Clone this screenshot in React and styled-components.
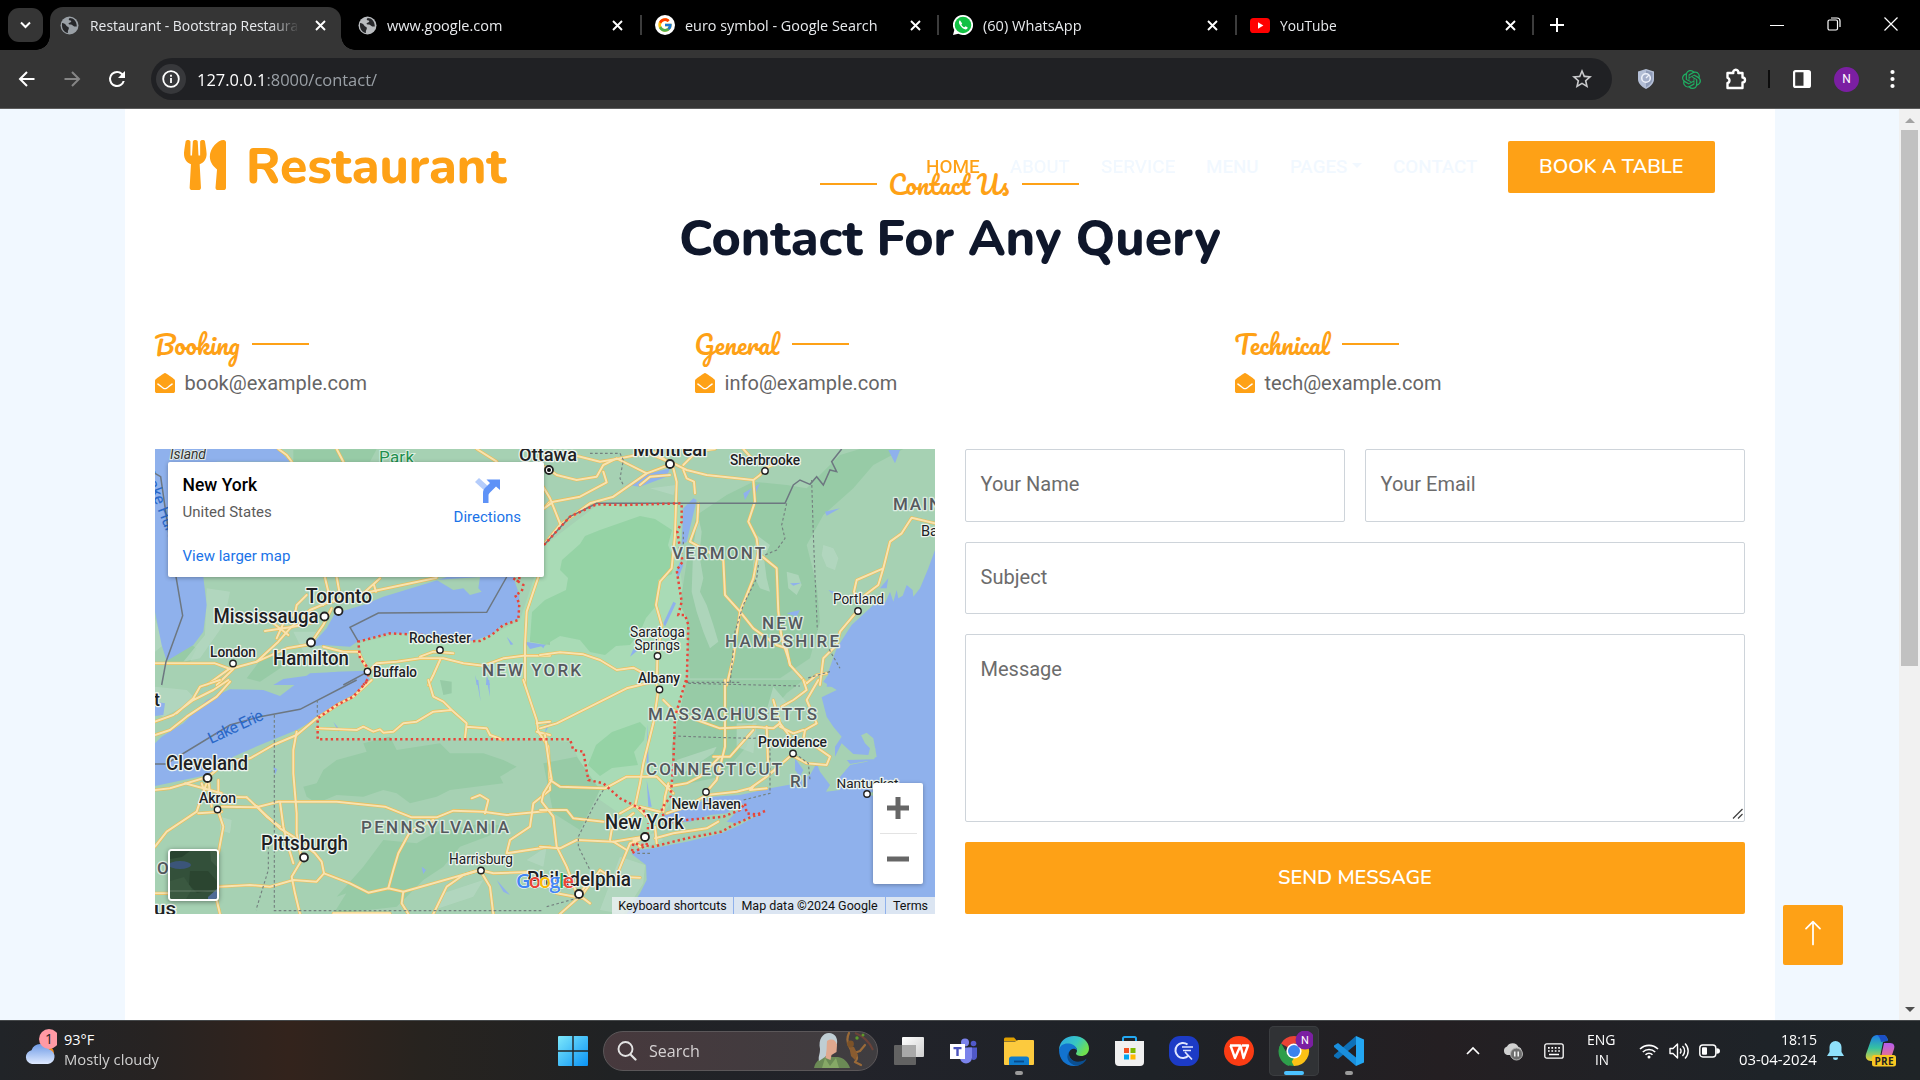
import React, { useLayoutEffect, useRef, useState } from "react";
import styled, { createGlobalStyle, css } from "styled-components";
import { FaUtensils, FaEnvelopeOpen } from "react-icons/fa";
import { BsArrowUp } from "react-icons/bs";
import { FcGoogle } from "react-icons/fc";
import { SiOpenai } from "react-icons/si";

const orange = "#FEA116";
const navy = "#0F172B";
const uiFont = '"Open Sans", "Noto Sans", sans-serif';
const roboto = 'Roboto, "Liberation Sans", sans-serif';
const bodyFont = 'Heebo, Roboto, "Liberation Sans", sans-serif';
const rounded = 'Nunito, "Open Sans", "Noto Sans", sans-serif';

const GlobalStyle = createGlobalStyle`
  * { box-sizing: border-box; }
  html, body { margin: 0; padding: 0; overflow: hidden; }
  body { font-family: ${roboto}; background: #000; }
  svg { display: block; flex: none; }
  h1, h5, p { margin: 0; }
`;

/* Text condensed or stretched to a given advance width */
const FitBox = styled.span`
  display: inline-block;
  flex: none;
  white-space: nowrap;
  text-align: left;
`;
const FitInner = styled.span`
  display: inline-block;
  transform-origin: 0 50%;
`;
function Fit({ w, children }) {
  const ref = useRef(null);
  const [k, setK] = useState(1);
  useLayoutEffect(() => {
    setK(w / ref.current.offsetWidth);
  }, [w]);
  return (
    <FitBox style={{ width: w }}>
      <FitInner ref={ref} style={{ transform: `scaleX(${k})` }}>{children}</FitInner>
    </FitBox>
  );
}

const Screen = styled.div`
  width: 1920px;
  height: 1080px;
  display: flex;
  flex-direction: column;
  overflow: hidden;
`;

/* ---------- Browser chrome ---------- */
const TabStrip = styled.div`
  height: 50px;
  background: #000;
  display: flex;
  align-items: flex-start;
  padding-left: 8px;
  color: #e8eaed;
  font: 15px/20px ${uiFont};
`;
const TabSearch = styled.div`
  width: 35px;
  height: 34px;
  margin-top: 8px;
  border-radius: 11px;
  background: #353535;
  display: grid;
  place-items: center;
`;
const Tab = styled.div`
  position: relative;
  height: 43px;
  margin-top: 7px;
  flex: none;
  width: ${(p) => (p.$active ? 291 : 297.5)}px;
  margin-left: ${(p) => (p.$active ? 7 : 0)}px;
  padding: 0 15.5px 7px ${(p) => (p.$active ? 10 : 16.5)}px;
  display: flex;
  align-items: center;
  gap: ${(p) => (p.$active ? 11 : 10)}px;
  border-radius: 13px 13px 0 0;
  background: ${(p) => (p.$active ? "#353535" : "transparent")};
  ${(p) =>
    p.$active &&
    css`
      &::before, &::after {
        content: "";
        position: absolute;
        bottom: 0;
        width: 14px;
        height: 14px;
      }
      &::before { left: -14px; background: radial-gradient(circle at 0 0, transparent 13.5px, #353535 14px); }
      &::after { right: -14px; background: radial-gradient(circle at 100% 0, transparent 13.5px, #353535 14px); }
    `}
`;
const TabTitle = styled.span`
  flex: 1;
  overflow: hidden;
  white-space: nowrap;
  height: 20px;
  ${(p) => p.$fade && "-webkit-mask-image: linear-gradient(90deg, #000 84%, transparent 98%);"}
`;
const TabRule = styled.div`
  width: 2px;
  flex: none;
  height: 20px;
  margin: 15px -3px 0 1px;
  background: #3c3c3c;
`;
const NewTab = styled.div`
  margin: 18px 0 0 18.5px;
`;
const WindowButtons = styled.div`
  margin: 16px 22px 0 auto;
  display: flex;
  gap: 42px;
  align-items: center;
`;
const Toolbar = styled.div`
  height: 59px;
  background: #353535;
  border-bottom: 1px solid #5c5c5c;
  display: flex;
  align-items: center;
  padding: 0 5px 0 17px;
`;
const NavButtons = styled.div`
  display: flex;
  align-items: center;
  gap: 25px;
  width: 134px;
  flex: none;
  svg:last-child { margin-left: -2px; }
`;
const AddressBar = styled.div`
  width: 1461px;
  flex: none;
  height: 42px;
  border-radius: 21px;
  background: #202124;
  display: flex;
  align-items: center;
  padding: 0 18px 0 5px;
  color: #fff;
  font: 17px/24px ${uiFont};
`;
const InfoDot = styled.div`
  width: 30px;
  height: 30px;
  border-radius: 50%;
  background: #37383b;
  display: grid;
  place-items: center;
  margin-right: 11px;
`;
const Host = styled.span`
  color: #fff;
  padding-top: 1px;
  i { font-style: normal; color: #9aa0a6; }
`;
const StarSlot = styled.div`margin-left: auto;`;
const Extensions = styled.div`
  margin-left: auto;
  display: flex;
  align-items: center;
`;
const ExtSlot = styled.div`
  width: ${(p) => p.$w || 45}px;
  display: grid;
  place-items: center;
`;
const Rule = styled.div`
  width: 2px;
  height: 18px;
  background: #0c0c0c;
`;
const Avatar = styled.div`
  width: 25px;
  height: 25px;
  border-radius: 50%;
  background: #7b1fa2;
  color: #fff;
  font: 12px/25px ${roboto};
  text-align: center;
`;

/* ---------- Page ---------- */
const Viewport = styled.div`
  height: 911px;
  display: flex;
  background: #f1f8ff;
  position: relative;
`;
const Container = styled.main`
  width: 1650px;
  margin-left: 125px;
  background: #fff;
  position: relative;
  padding: 60px 30px 0;
`;
const Header = styled.header`
  position: absolute;
  top: 0;
  left: 0;
  width: 100%;
  height: 116px;
  padding: 0 60px 0 59px;
  display: flex;
  align-items: center;
`;
const Brand = styled.div`
  display: flex;
  align-items: center;
  gap: 20px;
  color: ${orange};
  font: 800 50px/60px ${rounded};
  svg { width: 42px; height: 50px; margin-top: -5px; }
`;
const Nav = styled.nav`
  margin-left: auto;
  display: flex;
  gap: 31px;
  margin-right: 31px;
`;
const NavItem = styled.a`
  font: 500 18.75px/30px ${bodyFont};
  color: ${(p) => (p.$on ? orange : "#F1F8FF")};
  display: flex;
  align-items: center;
  gap: 5px;
`;
const Caret = styled.i`
  border: 5px solid transparent;
  border-top-color: #f1f8ff;
  border-bottom: 0;
  margin-top: -3px;
`;
const Solid = styled.button`
  border: 0;
  border-radius: 2px;
  background: ${orange};
  color: #fff;
  font: 600 20px/30px ${rounded};
  height: ${(p) => p.$h}px;
  width: ${(p) => (p.$w ? p.$w + "px" : "100%")};
  padding: 0;
`;
const SectionTitle = styled.h5`
  display: flex;
  align-items: center;
  justify-content: ${(p) => (p.$center ? "center" : "flex-start")};
  gap: 12px;
  height: 30px;
  margin-left: ${(p) => (p.$center ? -2 : 0)}px;
  color: ${orange};
  font: 600 25px/30px Pacifico, "Lato", cursive;
  &::before {
    content: "";
    display: ${(p) => (p.$center ? "block" : "none")};
    width: 57px;
    height: 2px;
    background: ${orange};
  }
  &::after {
    content: "";
    width: 57px;
    height: 2px;
    background: ${orange};
  }
`;
const Heading = styled.h1`
  margin: 10px 0 60px -1px;
  height: 60px;
  text-align: center;
  color: ${navy};
  font: 800 50px/60px ${rounded};
`;
const Columns = styled.div`
  display: grid;
  grid-template-columns: repeat(3, 540px);
  margin-left: -0.5px;
`;
const Mail = styled.p`
  margin-top: 9px;
  height: 30px;
  display: flex;
  align-items: center;
  gap: 10px;
  color: #666565;
  font: 20px/30px ${bodyFont};
  span { padding-top: 2px; }
  svg { color: ${orange}; }
`;
const Body = styled.div`
  margin-top: 51px;
  display: grid;
  grid-template-columns: 780px 780px;
  gap: 30px;
`;
const Form = styled.div`
  display: grid;
  grid-template-columns: 1fr 1fr;
  grid-template-rows: 73px 72px 188px 72px;
  gap: 20px;
`;
const Field = styled.div`
  grid-column: ${(p) => (p.$wide ? "1 / -1" : "auto")};
  border: 1px solid #ced4da;
  border-radius: 2px;
  padding: 20px 14.5px 19px;
  color: #6c6c6c;
  font: 20px/30px ${bodyFont};
  display: flex;
  justify-content: space-between;
  svg { align-self: flex-end; margin: 0 -13px -17px 0; }
`;
const Wide = styled.div`grid-column: 1 / -1;`;
const ToTop = styled.div`
  position: absolute;
  left: 1783px;
  top: 796px;
  width: 60px;
  height: 60px;
  border-radius: 2px;
  background: ${orange};
  color: #fff;
  display: grid;
  place-items: center;
  padding-bottom: 4px;
`;
const Scrollbar = styled.div`
  margin-left: auto;
  width: 21px;
  background: #f1f1f1;
  display: flex;
  flex-direction: column;
  align-items: center;
  justify-content: space-between;
`;
const ScrollHead = styled.div`
  display: flex;
  flex-direction: column;
  align-items: center;
  gap: 7px;
  padding-top: 9px;
`;
const Thumb = styled.div`
  width: 17px;
  height: 536px;
  background: #c1c1c1;
`;
const Tri = styled.i`
  border: 5px solid transparent;
  ${(p) => (p.$up ? "border-bottom-color:#a3a3a3;border-top:0;" : "border-top-color:#505050;border-bottom:0;margin-bottom:8px;")}
`;

/* ---------- Map ---------- */
const MapBox = styled.div`
  position: relative;
  width: 780px;
  height: 465px;
  overflow: hidden;
`;
const PlaceCard = styled.div`
  position: absolute;
  left: 13px;
  top: 13px;
  width: 376px;
  height: 115px;
  background: #fff;
  border-radius: 2px;
  box-shadow: 0 1px 4px rgba(0, 0, 0, 0.3);
  padding: 13px 23px 0 14.5px;
  display: flex;
  justify-content: space-between;
`;
const PlaceName = styled.div`
  font: 500 17.5px/20px ${roboto};
  color: #000;
`;
const PlaceSub = styled.div`
  margin-top: 8px;
  font: 15px/18px ${roboto};
  color: #5b5b5b;
`;
const MapLink = styled.div`
  margin-top: ${(p) => p.$top}px;
  font: 15px/18px ${roboto};
  color: #1a73e8;
`;
const Directions = styled.div`
  display: flex;
  flex-direction: column;
  align-items: center;
  padding-top: 3px;
`;
const ZoomBox = styled.div`
  position: absolute;
  right: 12px;
  top: 334px;
  width: 50px;
  height: 101px;
  background: #fff;
  border-radius: 2px;
  box-shadow: 0 1px 4px rgba(0, 0, 0, 0.3);
  display: flex;
  flex-direction: column;
  align-items: center;
`;
const ZoomKey = styled.div`
  height: 50px;
  width: 37px;
  display: grid;
  place-items: center;
  & + & { border-top: 1px solid #e3e3e3; }
`;
const Thumbnail = styled.div`
  position: absolute;
  left: 13px;
  top: 400px;
  width: 51px;
  height: 52px;
  border: 2px solid #fff;
  border-radius: 4px;
  overflow: hidden;
  box-shadow: 0 1px 5px rgba(0, 0, 0, 0.4);
`;
const Credits = styled.div`
  position: absolute;
  right: 0;
  bottom: 0;
  height: 17px;
  display: flex;
  gap: 1px;
`;
const Credit = styled.span`
  background: rgba(235, 240, 243, 0.82);
  width: ${(p) => p.$w}px;
  text-align: center;
  font: 12.5px/17px ${roboto};
  color: #111;
  white-space: nowrap;
`;

const roads = [
  [150, 445, [
    "M15 655 H195 L240 672 L320 650 L385 590 L420 550 L480 495 L540 470 L640 445 L860 398",
    "M170 720 L240 670 M200 720 L250 672", "M320 650 L410 610 L480 598 L520 540 L545 490",
    "M345 558 L430 545 L500 530 M370 535 L415 570 M470 450 L440 480 L435 505 L400 535 L380 580",
    "M525 398 L535 440 L520 480 M560 396 L568 440 L550 470 M640 445 L690 400 M672 420 L678 440",
    "M520 605 L580 620 L625 620 L640 650 L655 680", "M655 680 L680 655 L740 650 L810 640 L880 640 L940 655 L1000 662 L1060 640 L1120 632 H1200",
    "M810 635 L850 620 L910 625 M870 645 L850 690 L835 720", "M1165 396 L1150 440 L1130 500 L1125 600 L1125 720",
    "M385 12 L410 30 L425 50 M560 12 L580 50 M980 12 L1040 50 M1200 170 L1182 190",
  ]],
  [540, 445, [
    "M0 110 L30 160 L60 235 M12 190 L40 170 L120 155 L200 112 L190 80 M15 65 L50 90 L110 105 L170 95 L190 60 L230 40 L290 70 L320 85",
    "M15 295 L60 240 L150 175 L220 155 L320 85 L400 55 L440 75 L500 90 L640 105 L660 90 L675 70 L720 50",
    "M100 30 L180 50 L230 42 L340 20 L390 55 M400 55 L300 15 M430 60 L470 20 L525 12 M610 12 L640 45",
    "M400 70 L410 110 L408 175 L405 270 L395 370 L360 410 L348 480 L365 540 L352 640 L350 720",
    "M430 75 L440 100 L462 110 L465 145 M300 120 L330 95 L390 90", "M475 175 L472 230 L450 290 L550 345 L555 450 L600 500 L580 640 L560 720",
    "M640 105 L645 170 L625 230 L650 280 L655 320 L640 400 L600 500 L640 550 L710 600 L740 610 L750 660 L800 715",
    "M655 325 L710 370 L715 500 L725 580 L745 640 L750 660", "M1185 235 L1115 218 L1085 265 L1050 290 L1030 370 L950 405 L942 440 L950 465 M1030 370 L1015 420 L975 450",
    "M950 500 L900 560 L890 600 L850 640 L840 720 M800 715 L830 690 L860 685",
    "M0 630 L60 622 L130 628 L180 645 L230 675 L280 668 L320 690",
  ]],
  [150, 680, [
    "M15 125 L70 105 L130 60 L190 30 L235 0 M15 165 L60 150 L110 110 L200 50 L240 5 M80 100 L130 55 L150 20 L210 0",
    "M15 330 L60 325 L110 310 L175 290 L230 245 L300 235 L370 195 L440 165 L500 115 L570 70 L610 50 L665 0",
    "M500 145 L620 150 L640 140 L670 155 L690 148 L700 158 L730 155 L760 130 L800 125 L850 95 L905 90 L950 130 L945 175 M905 90 L880 65 L850 50 L835 0 M950 140 L1010 145 L1020 165 L1060 180",
    "M440 155 L430 210 L430 280 L440 400 L440 460 L455 540 L425 590 L435 640 L450 702",
    "M290 352 L320 380 L390 445 L430 470 L495 520 L515 545 L522 580 L600 610 L655 638 L715 625 L760 635 L850 610 L990 570 L1030 580 L1160 575",
    "M215 380 L320 382 L385 365 L560 365 L705 380 L785 412 L860 412 L910 392 L1000 395 L1070 405 L1200 392",
    "M15 500 L50 455 L140 395 L155 350 L175 295 M205 395 L220 440 L205 520 M155 310 L165 340 M205 300 L205 350 L290 352 M105 310 L160 325 L215 340 M175 300 L185 380 M145 400 L215 395 M320 378 L350 410 L390 440",
    "M390 365 L400 440 L415 500 L430 550", "M205 620 L300 615 L360 620 L430 600 L500 605 L522 580 M205 620 L200 660 L210 702 M15 640 H60",
    "M850 420 L780 455 L745 520 L730 570 L715 625 M760 635 L755 670 L775 702 M990 570 L940 585 L890 620 L850 702 M990 570 L1020 620 L1030 702 M550 700 H720",
    "M965 355 L990 345 L1015 360 L1005 400 M1120 0 L1160 120 L1165 155 L1195 200 L1200 330 L1150 370 L1140 440 L1080 480 L1070 520 L1200 500",
    "M1160 130 L1200 125 M1160 155 L1200 165",
  ]],
  [540, 680, [
    "M0 145 L50 130 L110 100 L170 70 L260 25 L340 5 M355 30 L340 130 L310 250 L300 310 L285 380 M370 60 L400 90 L470 120 L540 145 L640 140 L700 145 L720 130",
    "M15 165 L30 270 L35 300 L10 340 L5 365 L40 410 L50 500 L80 560 L110 640 M30 300 L60 320 L195 325 L260 290 L350 290 L380 320 L400 340",
    "M555 0 L555 100 L555 200 L530 300 L500 335 M520 230 L570 230 L640 150 M0 390 L80 390 L100 415 L190 425 M0 500 L60 505 L110 480 L220 485 L310 470",
    "M380 320 L440 310 L480 290 L540 230 M380 400 L440 380 L500 345 L590 335 L630 325 L680 290 L755 225 L800 250 L860 255 L870 230 L820 195 L790 180 L795 150 L830 130 L800 60 L835 0",
    "M680 140 L685 270 M700 60 L720 130 L750 170 M790 0 L800 30 L760 60 L725 80 M640 320 L630 330 L680 325 M720 140 L760 160 L790 150",
    "M345 475 L400 460 L500 445 L535 425 M300 380 L360 395 M345 440 L350 490 M240 400 L285 375 L320 410 M200 425 L270 430",
    "M310 475 L270 490 L245 550 L225 600 L180 570 L130 640 L60 702 M220 485 L260 510 M210 480 L215 450 L280 400 M310 470 L280 480 L300 500 M230 590 L300 593 M120 640 L150 600 M50 640 L130 655 L150 670",
    "M370 395 L375 350 L385 310",
  ]],
];
const dotted = [
  [150, 445, "M1108 396 V410 L1095 405 M1090 400 L1120 420 L1115 440 L1095 450 L1108 475 L1105 525 L1060 540 L1025 570 L990 588 L900 590 L820 570 L720 565 L625 590 L630 640 L655 670 L655 700 L640 720"],
  [540, 445, "M12 300 L90 215 L170 178 L250 180 L425 175 V230 L412 260 L420 310 L428 350 L410 375 L425 470 L415 510 L435 510 L445 540 L440 720"],
  [150, 680, "M650 5 L610 50 L560 75 L503 115 V178 H1180"],
  [540, 680, "M0 178 H90 L100 210 L130 215 L145 300 L190 310 L240 355 L310 390 L320 410 M438 0 L405 110 L400 250 L392 350 L365 385 L375 430 M375 430 L440 420 L550 410 L600 390 L615 370 L620 400 L670 405 M675 393 L580 435 L545 455 L440 475 L340 500 L280 490 L275 520 L320 495 L325 430"],
];
const borders = [
  [150, 445, "M15 85 L32 95 L60 290 L98 512 L48 650 L35 720 M1070 396 L1010 502 L685 504 L600 547 L625 590 M650 682 L580 720"],
  [540, 445, "M12 300 L90 215 L170 175 L735 175 L760 120 L780 105 L810 118 L830 95 L850 120 L870 75 L890 80 L875 50 L905 12"],
  [150, 680, "M15 252 H48 L240 135 L330 110 L450 88 L620 0"],
];
const dashes = [
  [540, 445, "M740 175 L725 240 L735 280 L710 315 L675 330 M815 105 L820 270 L832 555 M655 360 L650 400 L610 480 L585 560 L570 720 M440 712 H600 M860 600 L900 670 M870 680 L800 700 M150 25 L240 25 L250 45 L240 100 L250 120 M430 260 L430 300"],
  [150, 680, "M373 105 V692 H1180 M502 60 V110 M355 500 L355 570 L318 690"],
  [540, 680, "M445 10 L780 18 M400 168 L520 172 L640 175 L680 170 L690 210 V340 L610 360 M765 220 L805 250 L810 300 M190 330 L160 380 L115 470 L115 500 L135 540 L160 590 M20 680 L110 655 M330 520 L290 520"],
];
const forests = [
  [150, 445, "M1200 480 L1150 520 L1140 590 L1200 600Z M60 560 L140 610 L120 650 L50 650Z M350 620 L420 650 L330 710 L290 700Z M430 15 L680 12 L660 50 L430 50Z"],
  [540, 445, "M470 210 L560 150 L640 110 L740 120 L800 130 L900 30 L960 12 H1090 L1000 60 L940 130 L850 210 L800 300 L830 420 L840 530 L810 640 L720 700 H450 L440 520 L420 480 L440 350Z"],
  [150, 680, "M870 0 L905 5 V40 L880 45Z M520 270 L560 240 L650 215 L640 190 L720 170 L740 210 L870 190 L900 220 L1000 220 L1060 240 L1100 260 L1050 290 L1060 310 L900 330 L860 350 L780 370 L740 340 L700 330 L640 350 L560 345 L500 370 L470 350 L460 320 L500 310Z M700 480 L800 490 L860 455 L1000 430 L1080 440 L1010 470 L930 500 L880 560 L820 600 L740 680 L550 702 L620 590 L590 640 L560 650 L640 560Z"],
  [540, 680, "M440 0 H790 L740 40 L690 100 L640 120 L620 200 L540 290 L400 320 L395 200Z M10 250 L110 230 L180 330 L120 450 L40 400Z"],
];
const lights = [
  [150, 445, "M170 430 L240 440 L220 540 L150 640 L100 650 L165 570Z M15 520 L40 600 L15 620Z M430 560 L500 560 L530 620 L470 640Z"],
  [540, 445, "M650 270 L690 300 L672 340 L680 400 L690 440 L660 430 L640 390 L640 330Z M475 215 L485 260 L478 330 L490 400 L480 440 L500 480 L520 540 L535 590 L510 610 L490 560 L470 500 L455 440 L460 300Z M850 300 L880 310 L895 340 L885 375 L860 365 L845 330Z M740 380 L775 390 L785 420 L770 450 L745 430Z M330 130 L410 120 L400 150Z"],
  [150, 680, "M15 20 L110 30 L140 60 L40 110 L15 100Z M210 410 L245 420 L240 460 L210 450Z M880 640 L1000 600 L970 650 L850 690Z M1130 540 L1190 500 L1180 560Z"],
  [540, 680, "M700 20 L760 90 L730 130 L680 90Z M590 130 L650 130 L640 220 L590 200Z M410 240 L530 200 L520 220 L430 280Z M240 530 L315 555 L310 610 L250 702 L180 690Z M270 480 L340 460 L370 480 L320 500Z"],
];
const places = [
  ["Toronto", 306, 603, 66, 19.5, 338.5, 611], ["Mississauga", 213.5, 623, 105, 19.5, 324.5, 616.5], ["Hamilton", 273, 664.5, 76, 19.5, 311, 642.5],
  ["London", 210, 656.5, 46, 14.5, 233, 663.5], ["Rochester", 409, 643, 62, 14.5, 440, 650], ["Buffalo", 373, 676.5, 44, 14.5, 367.5, 671.5],
  ["Ottawa", 519, 461, 58, 18.5, 549, 470], ["Montreal", 633, 455.5, 74, 19.5, 670, 464], ["Sherbrooke", 730, 464.5, 70, 14.5, 765, 471],
  ["Portland", 833, 604, 51, 14.5, 858, 611, 400], ["Saratoga", 630, 636.5, 55, 14.5, 0, 0, 400], ["Springs", 634.5, 650, 45.5, 14.5, 657.5, 656, 400],
  ["Albany", 638, 683, 42, 14.5, 659.5, 689.5], ["Providence", 758, 746.5, 69, 14.5, 793, 753.5], ["Nantucket", 836.5, 788, 62, 13.5, 867, 794, 400],
  ["New Haven", 671.5, 809, 69.5, 14.5, 706, 792], ["New York", 605, 829, 79, 19.5, 645, 837], ["Philadelphia", 527, 886, 104, 19.5, 579, 894],
  ["Cleveland", 166, 769.5, 82, 19.5, 207.5, 778], ["Akron", 199, 803, 37, 14.5, 217.5, 809.5], ["Pittsburgh", 261, 849.5, 87, 19.5, 304, 857.5],
  ["Harrisburg", 449, 863.5, 64, 14.5, 481, 870.5, 400], ["us", 154, 915, 22, 19, 0, 0], ["t", 154, 706, 6, 19, 0, 0], ["Ba", 921, 536, 17, 14.5, 0, 0, 400],
];
const states = [
  ["NEW YORK", 482, 676, 99], ["VERMONT", 672, 559, 93], ["NEW", 762, 629, 41], ["HAMPSHIRE", 725, 646.5, 114], ["MASSACHUSETTS", 648, 720, 169],
  ["CONNECTICUT", 646, 775, 136], ["RI", 790, 787, 17], ["PENNSYLVANIA", 361, 833, 148], ["MAIN", 893, 510, 48], ["O", 157, 874, 11],
];

const Layer = ({ rows, ...rest }) =>
  rows.map(([x, y, d], i) => <path key={i} d={d} transform={`translate(${x} ${y}) scale(.33333)`} {...rest} />);

function MapDrawing() {
  return (
    <svg width="780" height="465" viewBox="155 449 780 465" fontFamily={roboto}>
      <rect x="155" y="449" width="780" height="465" fill="#a6d1b3" />
      <path fill="#a9dbb6" d="M545 545 L600 503 L682 503 L680 570 L688 620 L686 690 L672 800 L650 835 L600 800 L570 742 L540 740 H318 V716 L368 672 L358 643 L400 634 L490 636 L520 620 Z" />
      <Layer rows={forests} fill="#97cba6" />
      <path fill="#95d3a5" d="M655 519 L640 516 L600 530 L585 536 L580 544 L562 560 L560 570 L568 578 L566 590 L545 600 L532 612 L530 640 L545 645 L560 636 L580 640 L590 652 L605 655 L616 646 L630 645 L640 632 L646 618 L656 606 L660 590 L658 580 L672 574 L674 560 L668 545 L672 530Z M596 745 L612 732 L640 722 L646 728 L644 740 L634 752 L638 765 L612 768 L600 776 L588 765Z" />
      <Layer rows={lights} fill="#b6d9c3" opacity=".7" />
      <g fill="#8fb1ec">
        <path transform="translate(150 445) scale(.33333)" d="M15 12 H385 L420 50 L200 50 L160 396 L170 480 L160 560 L130 600 L50 648 L35 600 L15 500Z M480 605 L530 550 L555 505 L640 480 L700 455 L865 405 L890 396 H1090 L1108 450 L1108 520 L1060 540 L1020 570 L970 588 L820 568 L720 565 L625 588 L600 605 L520 600Z M370 720 L400 702 L560 680 L655 680 L640 720Z M1125 590 L1190 600 L1140 612Z M1070 575 L1090 598 L1082 600Z M1010 690 L1020 720 H1008Z M975 690 L985 720 H980Z" />
        <path fill="#a6d1b3" transform="translate(150 445) scale(.33333)" d="M860 405 L990 396 L985 430 L995 440 L960 450 L940 430 L910 435Z" />
        <path transform="translate(540 445) scale(.33333)" d="M1185 315 L1165 370 L1140 430 L1120 455 L1118 435 L1100 420 L1088 452 L1075 460 L1070 435 L1060 470 L1050 440 L1035 475 L1028 455 L1000 480 L935 540 L890 610 L865 680 L860 725 H1190Z M460 160 L470 165 L440 290 L425 300 L430 190Z M420 350 L430 360 L415 400 L408 380Z M400 470 L408 475 L375 545 L370 535Z M300 125 L260 120 L310 90 L390 70 L380 95Z M1045 15 H1080 L1065 55Z M270 635 L280 612 L295 615Z M610 145 L635 130 L615 165Z M640 130 L660 115 L645 150Z M855 200 L900 190 L860 212Z M750 415 L785 413 L760 422Z M865 435 L900 445 L880 450Z M740 505 L780 495 L770 515Z M1020 430 L1045 400 L1040 430Z M0 600 H15 L10 610Z" />
        <path transform="translate(150 680) scale(.33333)" d="M15 190 L35 170 L100 130 L170 60 L240 28 L340 30 L390 48 L440 10 L480 -20 L640 -28 L665 5 L600 60 L500 115 L440 150 L330 195 L250 230 L170 285 L100 300 L15 318Z M15 65 L45 70 L40 105 L15 108Z M980 0 L992 65 L985 0Z M1010 0 L1020 50 L1018 0Z M550 125 L570 150 L565 155Z M370 260 L382 268 L375 285Z M815 560 L828 570 L820 582Z M1040 600 L1080 645 L1060 635Z" />
        <path transform="translate(540 680) scale(.33333)" d="M862 -12 L850 5 L890 30 L845 52 L860 110 L880 140 L905 170 L885 200 L885 230 L920 240 L930 252 L1000 240 L1005 205 L985 168 L965 165 L980 158 L1000 175 L1010 230 L980 245 L930 255 L900 290 L900 330 L858 335 L870 315 L840 275 L830 250 L810 285 L760 312 L690 325 L600 345 L520 350 L440 382 L375 405 L370 430 L450 425 L510 405 L560 400 L595 375 L612 372 L560 425 L590 430 L670 395 L600 435 L545 460 L440 485 L340 505 L290 510 L275 522 L318 555 L320 600 L300 640 L260 702 H1190 V-12Z M320 300 L335 380 H325Z M322 130 L326 250 H320Z M605 65 L612 100 H606Z M765 235 L790 270 L780 290 L765 270Z M30 130 L15 160 L20 130Z" />
        <path fill="#a6d1b3" transform="translate(540 680) scale(.33333)" d="M920 240 L1003 238 L1006 205 L985 165 L963 165 L975 190 L990 205 L985 225 L940 222 L905 190 L885 230 L900 250 L900 290 L930 255Z M860 330 L880 312 L892 318 L880 332Z M975 340 L1010 335 L1000 348Z" />
      </g>
      {roads.map(([x, y, ds]) => (
        <g key={`${x}-${y}`} transform={`translate(${x} ${y}) scale(.33333)`} fill="none" strokeLinejoin="round" strokeLinecap="round">
          {ds.map((d, i) => <path key={i} d={d} stroke="#ebbc55" strokeWidth="9.500" />)}
          {ds.map((d, i) => <path key={`c${i}`} d={d} stroke="#f8e3b0" strokeWidth="6" />)}
        </g>
      ))}
      <Layer rows={borders} fill="none" stroke="#6d7780" strokeWidth="4.500" />
      <Layer rows={dashes} fill="none" stroke="#74807f" strokeWidth="3.400" strokeDasharray="8 7" />
      <Layer rows={dotted} fill="none" stroke="#e8453a" strokeWidth="7.500" strokeDasharray="7 9" />
      {states.map(([t, x, y, w]) => (
        <text key={t} x={x} y={y} textLength={w} fontSize="17" fontWeight="500" fill="#55595e" stroke="#dcece2" strokeWidth="2.600" strokeLinejoin="round" paintOrder="stroke">{t}</text>
      ))}
      {places.map(([t, x, y, w, s, cx, cy, wt = 500]) => (
        <g key={t}>
          {cx > 0 && <circle cx={cx} cy={cy} r={s > 17 ? 4 : 3.2} fill="#fff" stroke="#222" strokeWidth={s > 17 ? 1.8 : 1.4} />}
          {t === "Ottawa" && <circle cx={cx} cy={cy} r="2" fill="#111" />}
          <text x={x} y={y} textLength={w} lengthAdjust="spacingAndGlyphs" fontSize={s} fontWeight={wt} fill="#202124" stroke="#eef5f0" strokeWidth="2.600" strokeLinejoin="round" paintOrder="stroke">{t}</text>
        </g>
      ))}
      <text x="170" y="459" fontSize="14" fontStyle="italic" fill="#333" textLength="36" stroke="#e4eee8" strokeWidth="2" paintOrder="stroke">Island</text>
      <text x="379" y="463" fontSize="17" fill="#1e8e4e" textLength="35" stroke="#dcefe2" strokeWidth="2" paintOrder="stroke">Park</text>
      <text transform="translate(211 744) rotate(-25)" fontSize="16" fill="#2a68c8" textLength="59">Lake Erie</text>
      <text transform="translate(144 474) rotate(69)" fontSize="16" fill="#2a68c8">Lake Huron</text>
      <text x="516" y="888" fontSize="20" fontWeight="600" fontFamily='"Open Sans", sans-serif' textLength="58" stroke="#fff" strokeWidth="1" paintOrder="stroke">
        <tspan fill="#4285f4">G</tspan><tspan fill="#ea4335">o</tspan><tspan fill="#fbbc05">o</tspan><tspan fill="#4285f4">g</tspan><tspan fill="#34a853">l</tspan><tspan fill="#ea4335">e</tspan>
      </text>
    </svg>
  );
}

/* ---------- Taskbar ---------- */
const Taskbar = styled.footer`
  height: 60px;
  border-top: 1px solid #45484a;
  background: linear-gradient(90deg, #212428 0, #272322 8%, #33231c 15%, #27231f 22%, #202224 32%, #22232a 44%, #1e2227 60%, #241f22 75%, #1e2328 92%, #1f2427 100%);
  display: flex;
  align-items: center;
  color: #fff;
  font: 14.5px/20px ${uiFont};
`;
const Weather = styled.div`
  width: 557.5px;
  padding-left: 23px;
  display: flex;
  gap: 7px;
  align-items: center;
`;
const Stack = styled.div`
  display: flex;
  flex-direction: column;
  align-items: ${(p) => p.$align || "flex-start"};
  padding-bottom: 2px;
  span.dim { color: #cfcfcf; }
`;
const SearchPill = styled.div`
  width: 275px;
  height: 40px;
  margin: 0 0 0 15.5px;
  border-radius: 20px;
  border: 1px solid #5b5759;
  background: linear-gradient(90deg, #47393d, #3f3d40);
  display: flex;
  align-items: center;
  padding: 0 2px 0 13px;
  gap: 12px;
  font-size: 17px;
  color: #d6d2d3;
  svg:last-child { margin-left: auto; }
`;
const Apps = styled.div`
  display: flex;
  gap: 5px;
  margin-left: 6px;
`;
const TaskApp = styled.div`
  position: relative;
  width: 50px;
  height: 50px;
  border-radius: 5px;
  display: grid;
  place-items: center;
  ${(p) => p.$on && "background:#303235; box-shadow: inset 0 0 0 1px #3b3d40;"}
  &::after {
    content: "";
    position: absolute;
    bottom: 1px;
    width: ${(p) => (p.$on ? 20 : 8)}px;
    height: 4px;
    border-radius: 2px;
    background: ${(p) => (p.$on ? "#4cc2ff" : p.$run ? "#9b9b9b" : "transparent")};
  }
`;
const Tray = styled.div`
  margin-left: auto;
  display: flex;
  align-items: center;
  padding-right: 12px;
`;
const Cell = styled.div`
  width: ${(p) => p.$w}px;
  display: flex;
  justify-content: ${(p) => p.$j || "center"};
`;
const ChromeIconOffset = styled.div`padding: 0 0 0 2px;`;

/* ---------- Icons ---------- */
const Cross = () => (
  <svg width="11" height="11" viewBox="0 0 11 11" stroke="#fff" strokeWidth="1.900"><path d="M1 1l9 9M10 1l-9 9" /></svg>
);
const Globe = ({ c = "#9aa0a6" }) => (
  <svg width="19" height="19" viewBox="0 0 19 19">
    <circle cx="9.5" cy="9.5" r="9" fill={c} />
    <path d="M2 7c2 .2 3.600 1 4.200 2.600.6 1.300 2.400.9 2.600 2.400.2 1.600-1.200 1.900-.8 4.900C4.500 16.500 2 13.500 2 9.500zM9.800 2c-1.800 1-.9 2.500.8 2.600 1.400.2.600 2-1 2.100-1.400.1-1.300 1.800.3 1.800 2 0 2.600.6 3.600 1.600.9.800 2.400.4 3.300.3C16.900 5.500 13.500 2 9.800 2z" fill="#26272a" />
  </svg>
);
const Wapp = () => (
  <svg width="20" height="20" viewBox="0 0 20 20"><path d="M10 0a10 10 0 1 1-4.700 18.800L0 20l1.300-5A10 10 0 0 1 10 0z" fill="#fff" /><circle cx="10" cy="10" r="8.300" fill="#12c143" /><path d="M6.900 5.300c-1.300.8-1.300 2.600 0 4.800 1.600 2.700 4 4.300 5.800 4.300 1.100 0 2-.9 2-1.900l-2.100-1.200-1.200 1c-1.300-.5-2.500-1.700-3-2.900l.8-1z" fill="#fff" /></svg>
);
const YT = () => (
  <svg width="20" height="15" viewBox="0 0 20 15"><rect width="20" height="15" rx="3.600" fill="#f00" /><path d="M8 4.200v6.600l5.400-3.300z" fill="#fff" /></svg>
);
const Reload = () => (
  <svg width="24" height="24" viewBox="0 0 24 24" fill="#fff"><path d="M17.650 6.350A7.960 7.960 0 0 0 12 4a8 8 0 1 0 7.730 10h-2.080A6 6 0 1 1 12 6c1.660 0 3.140.69 4.220 1.780L13 11h7V4z" /></svg>
);
const Arrow = ({ flip, c }) => (
  <svg width="20" height="20" viewBox="0 0 20 20" fill="none" stroke={c} strokeWidth="2" transform={flip ? "scale(-1 1)" : undefined}><path d="M17.500 10H3.500M10 3l-7 7 7 7" /></svg>
);
const ChromeIcon = () => (
  <svg width="36" height="40" viewBox="0 0 36 40">
    <path d="M17 20 L4 12.500 A15 15 0 0 1 30 12.500 H17z" fill="#ea4335" />
    <path d="M17 20 L30 12.500 A15 15 0 0 1 17 35z" fill="#fbc116" />
    <path d="M17 20 L17 35 A15 15 0 0 1 4 12.500 L10.500 23.500z" fill="#2e9e4b" />
    <path d="M10.800 23.700 L17 35 L23.200 23.700z" fill="#fbc116" />
    <path d="M4 12.500 L10.800 24 L17 27 L12 35 A15 15 0 0 1 4 12.500z" fill="#2e9e4b" />
    <circle cx="17" cy="20" r="7.600" fill="#fff" /><circle cx="17" cy="20" r="6" fill="#3b82ee" />
    <circle cx="28" cy="9" r="9.500" fill="#7b1fa2" />
    <text x="28" y="13" fontSize="11" fill="#fff" textAnchor="middle" fontFamily={roboto}>N</text>
  </svg>
);

const tabs = [
  ["www.google.com", 115, <Globe c="#b9bcbf" />],
  ["euro symbol - Google Search", 193, <FcGoogle size={20} style={{ background: "#fff", borderRadius: 10, padding: 2 }} />],
  ["(60) WhatsApp", 99, <Wapp />],
  ["YouTube", 57, <YT />],
];

function BrowserChrome() {
  return (
    <>
      <TabStrip>
        <TabSearch>
          <svg width="11" height="8" viewBox="0 0 11 8" fill="none" stroke="#fff" strokeWidth="2"><path d="M1 1.500l4.500 4.500L10 1.500" /></svg>
        </TabSearch>
        <Tab $active>
          <Globe />
          <TabTitle $fade><Fit w={241}>Restaurant - Bootstrap Restaurant Te</Fit></TabTitle>
          <Cross />
        </Tab>
        {tabs.map(([t, w, icon]) => (
          <React.Fragment key={t}>
            <Tab>{icon}<TabTitle><Fit w={w}>{t}</Fit></TabTitle><Cross /></Tab>
            <TabRule />
          </React.Fragment>
        ))}
        <NewTab><svg width="14" height="14" viewBox="0 0 14 14" stroke="#fff" strokeWidth="2"><path d="M7 0v14M0 7h14" /></svg></NewTab>
        <WindowButtons>
          <svg width="14" height="14" viewBox="0 0 14 14" stroke="#fff"><path d="M0 8.500h14" /></svg>
          <svg width="16" height="16" viewBox="0 0 16 16" fill="none" stroke="#fff" strokeWidth="1.200"><rect x="2" y="4" width="9.500" height="10" rx="1.500" /><path d="M5 2h6a3 3 0 0 1 3 3v6" /></svg>
          <svg width="14" height="14" viewBox="0 0 14 14" stroke="#fff" strokeWidth="1.200"><path d="M.5.500l13 13M13.500.500l-13 13" /></svg>
        </WindowButtons>
      </TabStrip>
      <Toolbar>
        <NavButtons><Arrow c="#fff" /><Arrow c="#858585" flip /><Reload /></NavButtons>
        <AddressBar>
          <InfoDot><svg width="18" height="18" viewBox="0 0 18 18" fill="none" stroke="#fff" strokeWidth="1.800"><circle cx="9" cy="9" r="7.800" /><path d="M9 8v5M9 4.800v1.900" /></svg></InfoDot>
          <Host><Fit w={180}>127.0.0.1<i>:8000/contact/</i></Fit></Host>
          <StarSlot><svg width="24" height="24" viewBox="0 0 24 24" fill="#c9cacc"><path d="M22 9.240l-7.190-.62L12 2 9.190 8.630 2 9.240l5.460 4.730L5.820 21 12 17.270 18.180 21l-1.630-7.030L22 9.240zM12 15.400l-3.760 2.270 1-4.280-3.320-2.880 4.380-.38L12 6.100l1.710 4.040 4.380.38-3.320 2.880 1 4.280L12 15.400z" /></svg></StarSlot>
        </AddressBar>
        <Extensions>
          <ExtSlot $w={45}><svg width="16" height="20" viewBox="0 0 16 20"><path d="M8 0l8 2.500V10c0 4-3 7.500-8 10-5-2.500-8-6-8-10V2.500z" fill="#b4bfd6" /><path d="M8 1.500v17C12 16 14.500 13 14.500 10V3.600z" fill="#8f9cb8" /><circle cx="8" cy="9" r="4.300" fill="#a5b0ca" stroke="#edf1fa" strokeWidth="1.600" /><path d="M8 9l3-3" stroke="#edf1fa" strokeWidth="1.300" /></svg></ExtSlot>
          <ExtSlot $w={46}><SiOpenai size={19} color="#1fae62" /></ExtSlot>
          <ExtSlot $w={44}><svg width="22" height="22" viewBox="0 0 22 22" fill="none" stroke="#fff" strokeWidth="2.400" strokeLinejoin="round"><path d="M2.500 5H8.300a2.600 2.600 0 1 1 5 0H17.500V9.500a2.500 2.500 0 0 1 0 5V20H2.500V15a2.700 2.700 0 0 0 0-5.200z" /></svg></ExtSlot>
          <ExtSlot $w={22}><Rule /></ExtSlot>
          <ExtSlot $w={44}><svg width="18" height="18" viewBox="0 0 18 18"><rect x="1.100" y="1.100" width="15.800" height="15.800" rx="1.500" fill="none" stroke="#fff" strokeWidth="2.200" /><rect x="10.500" y="1" width="6.500" height="16" fill="#fff" /></svg></ExtSlot>
          <ExtSlot $w={45}><Avatar>N</Avatar></ExtSlot>
          <ExtSlot $w={46}><svg width="5" height="20" viewBox="0 0 5 20" fill="#fff"><circle cx="2.500" cy="3" r="2.100" /><circle cx="2.500" cy="10" r="2.100" /><circle cx="2.500" cy="17" r="2.100" /></svg></ExtSlot>
        </Extensions>
      </Toolbar>
    </>
  );
}

const navItems = [["HOME", 53.5], ["ABOUT", 60], ["SERVICE", 74], ["MENU", 53], ["PAGES", 57], ["CONTACT", 84]];
const contacts = [["Booking", 85, "book@example.com"], ["General", 85, "info@example.com"], ["Technical", 95, "tech@example.com"]];

function Page() {
  return (
    <Viewport>
      <Container>
        <SectionTitle $center><Fit w={121}>Contact Us</Fit></SectionTitle>
        <Heading><Fit w={542}>Contact For Any Query</Fit></Heading>
        <Columns>
          {contacts.map(([name, w, mail]) => (
            <div key={name}>
              <SectionTitle><Fit w={w}>{name}</Fit></SectionTitle>
              <Mail><FaEnvelopeOpen size={20} /><span>{mail}</span></Mail>
            </div>
          ))}
        </Columns>
        <Body>
          <MapBox>
            <MapDrawing />
            <PlaceCard>
              <div>
                <PlaceName>New York</PlaceName>
                <PlaceSub>United States</PlaceSub>
                <MapLink $top={26}>View larger map</MapLink>
              </div>
              <Directions>
                <svg width="25" height="25" viewBox="0 0 25 25"><path d="M0 4L4 0l10 9-3 5z" fill="#b4ccfb" /><path d="M8 25V15c0-3 1-4 3-6l4-4-3.500-3.500H25V12l-4-3.500-5 5c-2 2-2.500 2.500-2.500 4V25z" fill="#5e92f7" /></svg>
                <MapLink $top={5}>Directions</MapLink>
              </Directions>
            </PlaceCard>
            <ZoomBox>
              <ZoomKey><svg width="22" height="22" viewBox="0 0 22 22"><path d="M8.500 0h5v8.500H22v5h-8.500V22h-5v-8.500H0v-5h8.500z" fill="#666" /></svg></ZoomKey>
              <ZoomKey><svg width="22" height="6" viewBox="0 0 22 6"><path d="M0 .500h22v5H0z" fill="#666" /></svg></ZoomKey>
            </ZoomBox>
            <Thumbnail>
              <svg width="47" height="48" viewBox="0 0 47 48"><rect width="47" height="48" fill="#33503a" /><path d="M0 0h20l-8 6L0 8z" fill="#28422f" /><path d="M20 20h18l9 10v8l-20 4-8-8z" fill="#2b4530" /><path d="M0 30l14-4 8 12-6 10H0z" fill="#3a5840" /><ellipse cx="10" cy="14" rx="11" ry="4" fill="#3b5579" /><path d="M40 0h7v16l-6-6z" fill="#3f5b45" /><path d="M38 46l9-8v10H38z" fill="#4e6a95" /><path d="M0 40h47" stroke="#7c8f80" strokeWidth=".7" /></svg>
            </Thumbnail>
            <Credits><Credit $w={121}>Keyboard shortcuts</Credit><Credit $w={151}>Map data ©2024 Google</Credit><Credit $w={49}>Terms</Credit></Credits>
          </MapBox>
          <Form>
            <Field>Your Name</Field>
            <Field>Your Email</Field>
            <Field $wide>Subject</Field>
            <Field $wide>Message<svg width="11" height="11" viewBox="0 0 11 11" stroke="#444" strokeWidth="1.300"><path d="M1 10.500L10.500 1M6 10.500l4.500-4.500" /></svg></Field>
            <Wide><Solid $h={72}><Fit w={154}>SEND MESSAGE</Fit></Solid></Wide>
          </Form>
        </Body>
        <Header>
          <Brand><FaUtensils preserveAspectRatio="none" /><Fit w={261}>Restaurant</Fit></Brand>
          <Nav>
            {navItems.map(([t, w], i) => (
              <NavItem key={t} $on={i === 0}><Fit w={w}>{t}</Fit>{t === "PAGES" && <Caret />}</NavItem>
            ))}
          </Nav>
          <Solid $h={52} $w={207}><Fit w={145}>BOOK A TABLE</Fit></Solid>
        </Header>
      </Container>
      <ToTop><BsArrowUp size={28} /></ToTop>
      <Scrollbar>
        <ScrollHead><Tri $up /><Thumb /></ScrollHead>
        <Tri />
      </Scrollbar>
    </Viewport>
  );
}

function TaskbarView() {
  return (
    <Taskbar>
      <Weather>
        <svg width="34" height="44" viewBox="0 0 34 44">
          <defs><linearGradient id="cl" x1="0" y1="0" x2="0" y2="1"><stop offset="0" stopColor="#6f9be6" /><stop offset="1" stopColor="#dfeaff" /></linearGradient></defs>
          <circle cx="24" cy="24" r="7" fill="#f28a1d" />
          <path d="M9 35a7 7 0 0 1-.5-13.800A9.500 9.500 0 0 1 26 20.500 7.400 7.400 0 0 1 25 35z" fill="url(#cl)" />
          <circle cx="26" cy="10" r="10" fill="#ff9aa5" /><text x="26" y="15" fontSize="14" textAnchor="middle" fill="#222" fontFamily={uiFont}>1</text>
        </svg>
        <Stack><Fit w={30}>93°F</Fit><span className="dim"><Fit w={95}>Mostly cloudy</Fit></span></Stack>
      </Weather>
      <svg width="30" height="30" viewBox="0 0 30 30">
        <defs><linearGradient id="wn" x1="0" y1="0" x2="1" y2="1"><stop offset="0" stopColor="#7de8fb" /><stop offset="1" stopColor="#0a93f5" /></linearGradient></defs>
        <path d="M0 1a1 1 0 0 1 1-1h13.300v14.300H0zM15.700 0H29a1 1 0 0 1 1 1v13.300H15.700zM0 15.700h14.300V30H1a1 1 0 0 1-1-1zM15.700 15.700H30V29a1 1 0 0 1-1 1H15.700z" fill="url(#wn)" />
      </svg>
      <SearchPill>
        <svg width="20" height="20" viewBox="0 0 20 20" fill="none" stroke="#e4e4e4" strokeWidth="1.900"><circle cx="8.500" cy="8" r="7" /><path d="M13.500 13.500l5 5" strokeLinecap="round" strokeWidth="2.200" /></svg>
        <Fit w={51}>Search</Fit>
        <svg width="62" height="38" viewBox="0 0 62 38">
          <path d="M1 36c1-6 5-9 10-11h14c6 1 10 5 12 11z" fill="#6b8a55" />
          <path d="M7 17C5 7 10 1 16 1c6 0 9 5 8 11l-4 6-8 7-6 4c-1-5 1-6 1-12z" fill="#bfcdd3" />
          <path d="M14 9c5-3 9-1 10 4l-.5 7-5 3-1 5-5-2 1-8z" fill="#e0a88e" />
          <path d="M12 26l5 8 6-8 3 10H9z" fill="#86a866" />
          <path d="M36 1c-3 6-2 10 1 15l4 5 6-2 5-6M42 22c3 3 2 6 0 8l6 3" fill="none" stroke="#9a6a38" strokeWidth="2.200" strokeLinecap="round" strokeLinejoin="round" />
          <path d="M36 14l5 1 4 8-3 5-4-4z" fill="#8a5c30" />
          <circle cx="37.500" cy="12" r="3.400" fill="#7c5228" />
          <path d="M42 1c8 3 14 8 18 17" fill="none" stroke="#6b4238" strokeWidth="2" /><circle cx="44" cy="6" r="1.700" fill="#5d9a2a" /><circle cx="50" cy="3" r="1.500" fill="#5d9a2a" />
        </svg>
      </SearchPill>
      <Apps>
        <TaskApp><svg width="30" height="28" viewBox="0 0 30 28"><defs><linearGradient id="tv" x1="0" y1="0" x2="1" y2="1"><stop offset="0" stopColor="#fff" /><stop offset="1" stopColor="#cfcfcf" /></linearGradient></defs><rect y="8" width="22" height="20" rx="1" fill="#626262" /><rect x="8" width="22" height="20" rx="1" fill="url(#tv)" /><rect x="8" y="8" width="14" height="12" fill="#a9a9a9" /></svg></TaskApp>
        <TaskApp><svg width="28" height="26" viewBox="0 0 28 26"><circle cx="15" cy="4.500" r="4" fill="#7b83eb" /><circle cx="23.500" cy="5.500" r="2.800" fill="#5059c9" /><path d="M18 9.500h9v9c0 3-3 4-5 3z" fill="#5059c9" /><path d="M10 9.500h12v10a6 6 0 0 1-12 0z" fill="#7b83eb" /><rect y="6" width="15" height="15" fill="#fff" /><path d="M3.500 9h8v2.200H8.700V18H6.300v-6.800H3.500z" fill="#4b53bc" /></svg></TaskApp>
        <TaskApp $run><svg width="30" height="28" viewBox="0 0 30 28"><path d="M0 2a1.500 1.500 0 0 1 1.500-1.500H10l3 3.500H0z" fill="#e0a000" /><path d="M0 4.500h11l3-1.500h15a1 1 0 0 1 1 1V27a1 1 0 0 1-1 1H1a1 1 0 0 1-1-1z" fill="#fcca3e" /><path d="M5 28v-6a2.500 2.500 0 0 1 2.500-2.500h15A2.500 2.500 0 0 1 25 22v6z" fill="#0f7ccc" /><path d="M10 24.500h10" stroke="#064a8a" strokeWidth="1.800" /></svg></TaskApp>
        <TaskApp><svg width="30" height="30" viewBox="0 0 30 30"><defs><linearGradient id="eg" x1="0" y1="0" x2="1" y2=".5"><stop offset="0" stopColor="#2aa6e8" /><stop offset=".6" stopColor="#39c8c0" /><stop offset="1" stopColor="#6fe04f" /></linearGradient></defs><path d="M0 13C1 5 7 0 15 0c9 0 15 6 15 12.500 0 5-4 7.500-8 7.500-3 0-5-1-5-2.200 0-1 1-1.500 1-3.300C18 11 14 9 10 9 5 9 1 11 0 14z" fill="url(#eg)" /><path d="M0 14C1 9 5 7 10 7.500c4 .5 8 3 8 7-2-3-7-2-8 2-1 6 5 11 12 10l3-1c-3 3-6 4.500-10 4.500C6 30 0 23 0 14z" fill="#1273cf" /><path d="M10 16c-1 6 4 10.500 11 9.500 3-.4 5-1.500 6.500-3-1 4-6 7.500-11 7-5-1-9-6-8-10 .2-1.500.8-2.700 1.500-3.500z" fill="#0b4f91" /></svg></TaskApp>
        <TaskApp><svg width="29" height="30" viewBox="0 0 29 30"><path d="M8 6V2.500A1.500 1.500 0 0 1 9.500 1h10A1.500 1.500 0 0 1 21 2.500V6" fill="none" stroke="#23a8f2" strokeWidth="2" /><path d="M0 5h29v21a4 4 0 0 1-4 4H4a4 4 0 0 1-4-4z" fill="#f0f0f0" /><path d="M9 12h5v5H9z" fill="#f25022" /><path d="M15.500 12h5v5h-5z" fill="#7fba00" /><path d="M9 18.500h5v5H9z" fill="#00a4ef" /><path d="M15.500 18.500h5v5h-5z" fill="#ffb900" /></svg></TaskApp>
        <TaskApp><svg width="30" height="30" viewBox="0 0 30 30"><rect width="30" height="30" rx="11" fill="#1c3bc6" /><path d="M18.500 8.500a7.500 7.500 0 1 0 1 11" fill="none" stroke="#dfe6ff" strokeWidth="2" /><path d="M13 11h11M14 14.500h8M16 16l7 7.500" stroke="#dfe6ff" strokeWidth="1.700" /></svg></TaskApp>
        <TaskApp><svg width="30" height="30" viewBox="0 0 30 30"><circle cx="15" cy="15" r="15" fill="#fb3c14" /><path d="M6 9.500h9.500L17 13M6.500 9.500L11 22l5.500-12.500L19.500 22 24 9.500h-6" fill="none" stroke="#fff" strokeWidth="2.400" strokeLinejoin="round" /></svg></TaskApp>
        <TaskApp $on><ChromeIconOffset><ChromeIcon /></ChromeIconOffset></TaskApp>
        <TaskApp $run><svg width="30" height="30" viewBox="0 0 30 30"><path d="M22 0l8 3.500v23L22 30z" fill="#23a6f2" /><path d="M22 0v8.500L4 23 0 20.500v-1.500z" fill="#0e71b8" /><path d="M22 30v-8.500L4 7 0 9.500V11z" fill="#1a8fdd" /></svg></TaskApp>
      </Apps>
      <Tray>
        <Cell $w={40}><svg width="14" height="9" viewBox="0 0 14 9" fill="none" stroke="#fff" strokeWidth="1.700"><path d="M1 8l6-6 6 6" /></svg></Cell>
        <Cell $w={40}><svg width="22" height="20" viewBox="0 0 22 20"><path d="M5 14A4.500 4.500 0 0 1 5 5.500 6.500 6.500 0 0 1 16.500 6 4.200 4.200 0 0 1 17 14z" fill="#d0d0d0" /><circle cx="14.500" cy="13" r="6" fill="#6f6f6f" stroke="#b5b5b5" /><path d="M12.800 10.500v5M16.200 10.500v5" stroke="#fff" strokeWidth="1.400" /></svg></Cell>
        <Cell $w={41}><svg width="20" height="16" viewBox="0 0 20 16" fill="none" stroke="#fff" strokeWidth="1.300"><rect x=".8" y=".8" width="18.400" height="14.400" rx="2" /><path d="M4 4.800h12M4 8h12" strokeDasharray="1.700 1.700" strokeWidth="1.700" /><path d="M5 11.500h10" strokeWidth="1.500" /></svg></Cell>
        <Cell $w={55}><Stack $align="center"><Fit w={29}>ENG</Fit><Fit w={14}>IN</Fit></Stack></Cell>
        <Cell $w={40}><svg width="20" height="16" viewBox="0 0 20 16" fill="none" stroke="#fff" strokeWidth="1.600"><path d="M1 6a13 13 0 0 1 18 0M3.800 9a9 9 0 0 1 12.400 0M6.500 11.800a5 5 0 0 1 7 0" /><circle cx="10" cy="14" r="1.500" fill="#fff" stroke="none" /></svg></Cell>
        <Cell $w={20}><svg width="20" height="18" viewBox="0 0 20 18" fill="none" stroke="#fff" strokeWidth="1.400"><path d="M1 6.500h3L8.500 2v14L4 11.500H1z" strokeLinejoin="round" /><path d="M11 6.500a3.500 3.500 0 0 1 0 5M13.500 4a7 7 0 0 1 0 10M16 1.500a10.500 10.500 0 0 1 0 15" /></svg></Cell>
        <Cell $w={40}><svg width="21" height="14" viewBox="0 0 21 14" fill="none" stroke="#fff" strokeWidth="1.400"><rect x=".8" y="1" width="16" height="12" rx="3" /><rect x="3" y="3.300" width="5" height="7.400" rx="1" fill="#fff" stroke="none" /><path d="M18 5v4c3 0 3-4 0-4z" fill="#fff" /></svg></Cell>
        <Cell $w={88} $j="flex-end"><Stack $align="flex-end"><Fit w={36}>18:15</Fit><Fit w={78}>03-04-2024</Fit></Stack></Cell>
        <Cell $w={37}><svg width="17" height="19" viewBox="0 0 17 19"><path d="M8.500 0a6 6 0 0 1 6 6v5l2.500 4H0l2.500-4V6a6 6 0 0 1 6-6z" fill="#8fe0fa" /><path d="M6 16.500h5a2.500 2.500 0 0 1-5 0z" fill="#8fe0fa" /></svg></Cell>
        <Cell $w={54}>
          <svg width="32" height="32" viewBox="0 0 32 32">
            <defs><linearGradient id="cp" x1="0" y1="0" x2="0" y2="1"><stop offset="0" stopColor="#1f7be8" /><stop offset=".5" stopColor="#35c2a0" /><stop offset="1" stopColor="#f0d02a" /></linearGradient><linearGradient id="cq" x1="0" y1="0" x2="0" y2="1"><stop offset="0" stopColor="#b45cf0" /><stop offset="1" stopColor="#fb7a6a" /></linearGradient></defs>
            <path d="M6 5a7 7 0 0 1 6-5h6c3 0 4 2 5 5l-5 2-3 15c-1 3-2 4-5 4H6c-4 0-6-3-5-7z" fill="url(#cp)" />
            <path d="M12 0h6c3 0 4 2 5 6l-7 1C15 3 14 1 12 0z" fill="#1b4fc4" />
            <path d="M19 8h6c4 0 5 3 4 6l-3 9c-1 3-3 4-5 4h-6z" fill="url(#cq)" />
            <rect x="7" y="20" width="24" height="11.500" rx="2.500" fill="#f9c822" /><text x="19" y="29.500" fontSize="10" fontWeight="700" textAnchor="middle" fill="#222" fontFamily={uiFont} textLength="19">PRE</text>
          </svg>
        </Cell>
      </Tray>
    </Taskbar>
  );
}

export default function App() {
  return (
    <Screen>
      <GlobalStyle />
      <BrowserChrome />
      <Page />
      <TaskbarView />
    </Screen>
  );
}
